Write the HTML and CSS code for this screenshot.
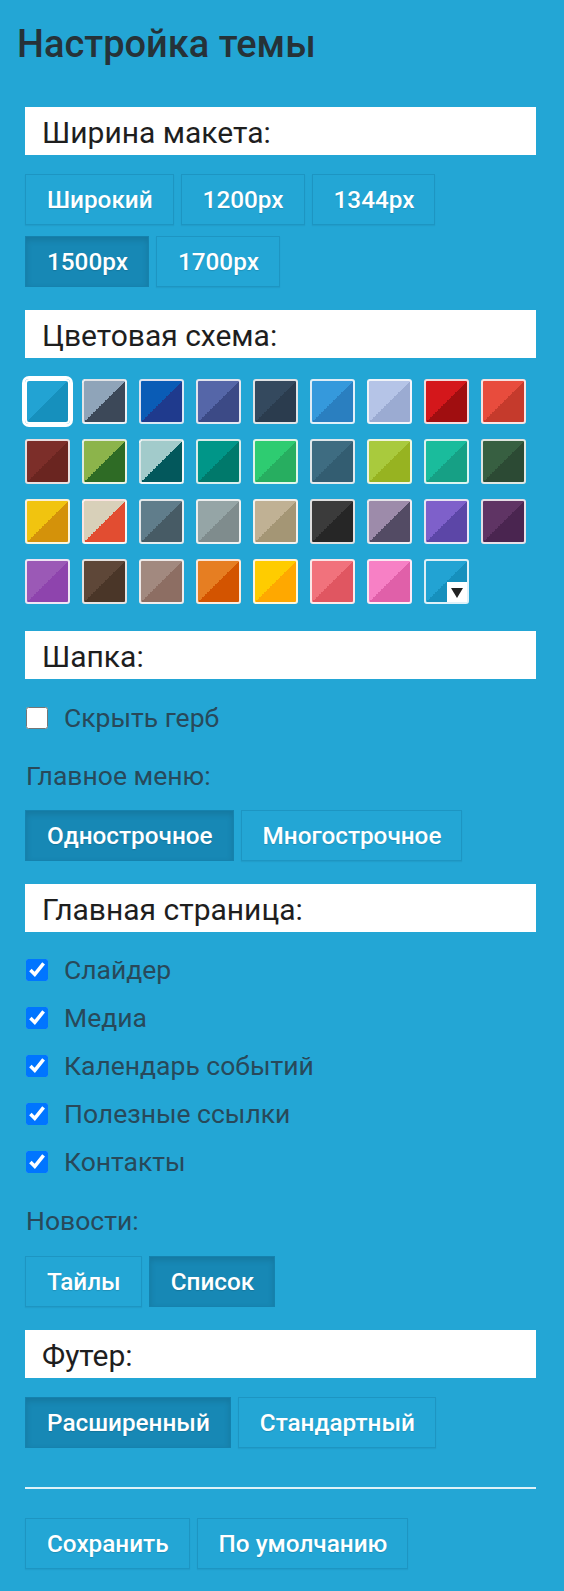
FILE: index.html
```html
<!DOCTYPE html>
<html lang="ru">
<head>
<meta charset="utf-8">
<title>Настройка темы</title>
<link rel="stylesheet" href="styles.css">
</head>
<body>
<div class="panel">
  <h1 class="title">Настройка темы</h1>

  <h2 class="bar first">Ширина макета:</h2>
  <div class="btns">
    <button class="btn">Широкий</button>
    <button class="btn">1200px</button>
    <button class="btn">1344px</button>
    <button class="btn active">1500px</button>
    <button class="btn">1700px</button>
  </div>

  <h2 class="bar">Цветовая схема:</h2>
  <div class="swatches">
    <span class="sw selected" style="--a:#22a3d3;--b:#1690bd"></span>
    <span class="sw" style="--a:#8fa4b9;--b:#3c4858"></span>
    <span class="sw" style="--a:#0a5cb6;--b:#1f3a8d"></span>
    <span class="sw" style="--a:#5566a8;--b:#3c4a86"></span>
    <span class="sw" style="--a:#34495e;--b:#2b3c4e"></span>
    <span class="sw" style="--a:#3599dc;--b:#2a7fc0"></span>
    <span class="sw" style="--a:#b5c4e7;--b:#9babd2"></span>
    <span class="sw" style="--a:#d4171b;--b:#a00e10"></span>
    <span class="sw" style="--a:#e84c3d;--b:#c53a2c"></span>

    <span class="sw" style="--a:#7c2e29;--b:#6a2520"></span>
    <span class="sw" style="--a:#8cb44b;--b:#2e6b25"></span>
    <span class="sw" style="--a:#a2cbcb;--b:#03585c"></span>
    <span class="sw" style="--a:#009688;--b:#00796b"></span>
    <span class="sw" style="--a:#2ecc71;--b:#27ae60"></span>
    <span class="sw" style="--a:#3e6c81;--b:#335d71"></span>
    <span class="sw" style="--a:#a9ca3d;--b:#97b321"></span>
    <span class="sw" style="--a:#1abc9c;--b:#16a085"></span>
    <span class="sw" style="--a:#375f41;--b:#2c4a34"></span>

    <span class="sw" style="--a:#f1c40f;--b:#d4920a"></span>
    <span class="sw" style="--a:#d8d0b9;--b:#e24d31"></span>
    <span class="sw" style="--a:#607d8b;--b:#475b65"></span>
    <span class="sw" style="--a:#95a5a6;--b:#7f8c8d"></span>
    <span class="sw" style="--a:#c0b194;--b:#a49675"></span>
    <span class="sw" style="--a:#3b3b3b;--b:#262626"></span>
    <span class="sw" style="--a:#9d8baa;--b:#534b64"></span>
    <span class="sw" style="--a:#7e60ca;--b:#5c46a7"></span>
    <span class="sw" style="--a:#5f3464;--b:#4a2550"></span>

    <span class="sw" style="--a:#9b59b6;--b:#8e44ad"></span>
    <span class="sw" style="--a:#5e4738;--b:#4a3628"></span>
    <span class="sw" style="--a:#a2897f;--b:#8d6e63"></span>
    <span class="sw" style="--a:#e67e22;--b:#d35400"></span>
    <span class="sw" style="--a:#ffcc00;--b:#ffa800"></span>
    <span class="sw" style="--a:#f1727c;--b:#e05661"></span>
    <span class="sw" style="--a:#f780c5;--b:#e060a9"></span>
    <span class="sw custom" style="--a:#22a3d3;--b:#1690bd">
      <span class="picker"><svg width="12" height="10" viewBox="0 0 12 10"><polygon points="0,0 12,0 6,10" fill="#222"/></svg></span>
    </span>
  </div>

  <h2 class="bar bar-swatch">Шапка:</h2>
  <label class="check first-check"><input type="checkbox"><span>Скрыть герб</span></label>
  <div class="label">Главное меню:</div>
  <div class="btns">
    <button class="btn active">Однострочное</button>
    <button class="btn">Многострочное</button>
  </div>

  <h2 class="bar">Главная страница:</h2>
  <div class="checks">
    <label class="check"><input type="checkbox" checked><span>Слайдер</span></label>
    <label class="check"><input type="checkbox" checked><span>Медиа</span></label>
    <label class="check"><input type="checkbox" checked><span>Календарь событий</span></label>
    <label class="check"><input type="checkbox" checked><span>Полезные ссылки</span></label>
    <label class="check"><input type="checkbox" checked><span>Контакты</span></label>
  </div>
  <div class="label">Новости:</div>
  <div class="btns">
    <button class="btn">Тайлы</button>
    <button class="btn active">Список</button>
  </div>

  <h2 class="bar">Футер:</h2>
  <div class="btns">
    <button class="btn active">Расширенный</button>
    <button class="btn">Стандартный</button>
  </div>

  <hr class="sep">
  <div class="btns actions">
    <button class="btn">Сохранить</button>
    <button class="btn">По умолчанию</button>
  </div>
</div>
</body>
</html>
```

FILE: styles.css
```css
html, body {
  margin: 0;
  padding: 0;
  background: #23a6d5;
}
body {
  font-family: Roboto, "Noto Sans", "DejaVu Sans", sans-serif;
  color: #28495a;
}
.panel {
  padding: 23px 28px 40px 25px;
}
.title {
  margin: 0 0 0 -8px;
  font-size: 38px;
  line-height: 42px;
  font-weight: 500;
  color: #263238;
}
.bar {
  margin: 23px 0 0 0;
  background: #fff;
  color: #1e1e1e;
  font-size: 30px;
  font-weight: 400;
  line-height: 45px;
  padding: 3px 17px 0 17px;
}
.bar.first { margin-top: 42px; }
.bar.bar-swatch { margin-top: 27px; }

.btns {
  display: flex;
  flex-wrap: wrap;
  gap: 11px 7px;
  margin-top: 19px;
}
.btn {
  height: 51px;
  box-sizing: border-box;
  padding: 0 20px 0 21px;
  border: 1px solid rgba(0, 60, 100, 0.16);
  background: transparent;
  color: #fff;
  font-family: Roboto, "Noto Sans", sans-serif;
  font-size: 24.3px;
  font-weight: 500;
  line-height: 49px;
  text-shadow: 0 1px 1px rgba(0, 0, 0, 0.14);
  box-shadow: 0 1px 1px rgba(0, 0, 0, 0.05);
  cursor: pointer;
}
.btn.active {
  background: #1788b5;
  box-shadow: inset 0 3px 6px rgba(0, 0, 0, 0.12);
  border-color: rgba(0, 60, 100, 0.08);
}

.swatches {
  display: grid;
  grid-template-columns: repeat(9, 45px);
  grid-auto-rows: 45px;
  gap: 15px 12px;
  margin-top: 21px;
}
.sw {
  display: block;
  box-sizing: border-box;
  width: 45px;
  height: 45px;
  border: 2px solid rgba(255, 255, 255, 0.85);
  border-radius: 3px;
  background: linear-gradient(to bottom right, var(--a) 50%, var(--b) 50%);
  position: relative;
}
.sw.selected {
  border-color: #fff;
  box-shadow: 0 0 0 3px #fff;
  border-radius: 4px;
}
.picker {
  position: absolute;
  right: 0;
  bottom: 0;
  width: 20px;
  height: 20px;
  background: #fff;
  display: flex;
  align-items: center;
  justify-content: center;
}
.picker svg { display: block; margin-top: 2px; }

.check {
  display: flex;
  align-items: center;
  height: 30px;
  font-size: 26.5px;
  line-height: 30px;
}
.check input {
  width: 22px;
  height: 22px;
  margin: 0 16px 0 1px;
}
.first-check { margin-top: 24px; }
.checks {
  display: flex;
  flex-direction: column;
  gap: 18px;
  margin-top: 23px;
}
.label {
  margin-top: 28px;
  font-size: 26.5px;
  line-height: 30px;
  padding-left: 1px;
}
.checks + .label { margin-top: 29px; }
.label + .btns { margin-top: 19px; }
.checks + .label + .btns { margin-top: 20px; }
.bar + .btns { margin-top: 19px; }

.sep {
  margin: 39px 0 0 0;
  border: 0;
  border-top: 2px solid rgba(255, 255, 255, 0.85);
  height: 0;
}
.actions { margin-top: 29px; }
```
